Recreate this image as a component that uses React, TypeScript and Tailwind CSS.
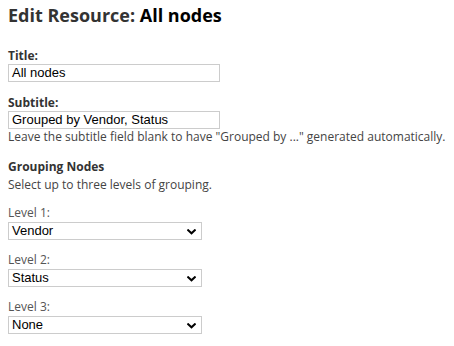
const FIELD_FONT = 'font-["Liberation_Sans",Arial,sans-serif]';

function Chevron() {
  return (
    <svg
      viewBox="0 0 9 6"
      className="absolute right-[5px] top-[6px] w-[9px] h-[6px]"
      fill="none"
      stroke="black"
      strokeWidth={2}
      strokeLinecap="square"
    >
      <polyline points="1.2,1.2 4.5,4.3 7.8,1.2" />
    </svg>
  );
}

function LevelSelect({ label, value, first }: { label: string; value: string; first?: boolean }) {
  return (
    <div className={first ? 'mt-[11px]' : 'mt-[12px]'}>
      <div className="text-[12px] leading-[16px] text-[#555]">{label}</div>
      <div className="relative mt-[1px] w-[194px] h-[18px] border border-[#ccc] bg-white">
        <div className={`${FIELD_FONT} text-[13px] leading-[16px] pl-[3px] text-black`}>{value}</div>
        <Chevron />
      </div>
    </div>
  );
}

function TextField({ label, value, className }: { label: string; value: string; className: string }) {
  return (
    <div className={className}>
      <div className="text-[12px] leading-[16px] font-bold text-[#333]">{label}</div>
      <div className="w-[212px] h-[18px] border border-[#ccc] bg-white">
        <div className={`${FIELD_FONT} text-[13px] leading-[16px] pl-[3px] text-black`}>{value}</div>
      </div>
    </div>
  );
}

export default function App() {
  return (
    <div className='min-h-screen bg-white px-[8px] pt-[2px] font-["Open_Sans",sans-serif] text-[#333]'>
      {/* Header */}
      <h1 className="text-[18px] leading-[26px] font-bold text-[#333]">
        Edit Resource: <span className="text-black">All nodes</span>
      </h1>

      <TextField className="mt-[20px]" label="Title:" value="All nodes" />
      <TextField className="mt-[13px]" label="Subtitle:" value="Grouped by Vendor, Status" />
      <p className="text-[12px] leading-[16px] text-[#444] whitespace-nowrap">
        Leave the subtitle field blank to have "Grouped by ..." generated automatically.
      </p>

      {/* Grouping */}
      <div className="mt-[13px]">
        <div className="text-[12px] leading-[18px] font-bold text-[#333]">Grouping Nodes</div>
        <div className="text-[12px] leading-[18px] text-[#444]">Select up to three levels of grouping.</div>
        <LevelSelect first label="Level 1:" value="Vendor" />
        <LevelSelect label="Level 2:" value="Status" />
        <LevelSelect label="Level 3:" value="None" />
      </div>
    </div>
  );
}
